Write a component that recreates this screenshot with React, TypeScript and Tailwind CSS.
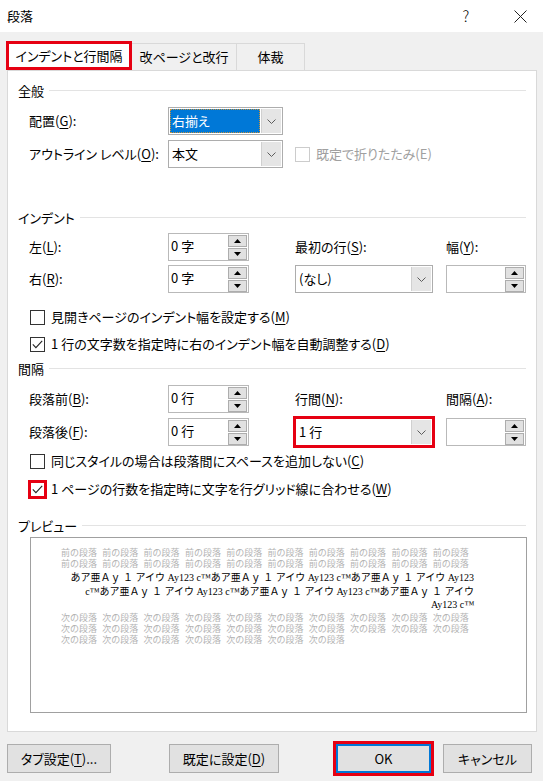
import React from "react";

// 段落 dialog (Word) — インデントと行間隔 tab

const U = ({ children }: { children: React.ReactNode }) => (
  <span className="underline decoration-1 underline-offset-2">{children}</span>
);

function SectionHeader({ title }: { title: string }) {
  return (
    <div className="flex h-[18px] items-center px-[10px]">
      <span className="text-[13px] leading-none">{title}</span>
      <div className="ml-[5px] h-px flex-1 bg-[#e3e3e3]" />
    </div>
  );
}

function Chevron() {
  return (
    <svg width="9" height="5" viewBox="0 0 9 5">
      <path d="M0.5 0.5 L4.5 4.5 L8.5 0.5" fill="none" stroke="#5c5c5c" strokeWidth="1" />
    </svg>
  );
}

function Triangle({ up }: { up?: boolean }) {
  return (
    <svg width="7" height="4" viewBox="0 0 7 4">
      <polygon points={up ? "0,4 3.5,0 7,4" : "0,0 3.5,4 7,0"} fill="#000" />
    </svg>
  );
}

function Select({
  className,
  children,
  focused,
  red,
}: {
  className: string;
  children?: React.ReactNode;
  focused?: boolean;
  red?: boolean;
}) {
  return (
    <div className={`relative flex h-[28px] border border-[#adadad] bg-white ${className}`}>
      {focused ? (
        <div className="m-[1px] flex flex-1 items-center border border-dotted border-[#c8913a] bg-[#0078d7] pl-px text-[13px] text-white">
          {children}
        </div>
      ) : (
        <div className="flex flex-1 items-center pl-[3px] text-[13px]">{children}</div>
      )}
      <div className="my-px mr-px flex w-[20px] items-center justify-center border-l border-[#d0d0d0] bg-[#e5e5e5]">
        <Chevron />
      </div>
      {red && <span className="pointer-events-none absolute -inset-[3px] border-[3px] border-[#e60012]" />}
    </div>
  );
}

function Spin({ className, value }: { className: string; value?: string }) {
  return (
    <div className={`flex h-[28px] border border-[#b9b9b9] bg-white ${className}`}>
      <span className="flex-1 pl-[2px] text-[13px] leading-[23px]">{value}</span>
      <div className="flex flex-col justify-center gap-px pr-px">
        <div className="flex h-[12px] w-[19px] items-center justify-center border border-[#adadad] bg-[#e1e1e1]">
          <Triangle up />
        </div>
        <div className="flex h-[12px] w-[19px] items-center justify-center border border-[#adadad] bg-[#e1e1e1]">
          <Triangle />
        </div>
      </div>
    </div>
  );
}

function Check({
  children,
  checked,
  disabled,
  red,
}: {
  children: React.ReactNode;
  checked?: boolean;
  disabled?: boolean;
  red?: boolean;
}) {
  return (
    <div className="flex h-[20px] items-center">
      <span
        className={`relative flex h-[15px] w-[15px] items-center justify-center border bg-white ${
          disabled ? "border-[#cccccc]" : "border-[#333333]"
        }`}
      >
        {checked && (
          <svg width="11" height="9" viewBox="0 0 11 9">
            <path d="M0.8 4.4 L3.9 7.6 L10.2 0.8" fill="none" stroke="#222" strokeWidth="1.1" />
          </svg>
        )}
        {red && <span className="pointer-events-none absolute -inset-[3px] border-[3px] border-[#e60012]" />}
      </span>
      <span className={`ml-[6px] text-[13px] ${disabled ? "text-[#a0a0a0]" : ""}`}>{children}</span>
    </div>
  );
}

function Label({ className, children }: { className?: string; children: React.ReactNode }) {
  return <span className={`text-[13px] ${className ?? ""}`}>{children}</span>;
}

function Button({ className, children, focus }: { className: string; children: React.ReactNode; focus?: boolean }) {
  return (
    <div
      className={`relative flex h-[29px] items-center justify-center bg-[#e1e1e1] text-[13px] ${
        focus ? "border-2 border-[#0078d7]" : "border border-[#adadad]"
      } ${className}`}
    >
      {children}
      {focus && <span className="pointer-events-none absolute -inset-[5px] border-[3px] border-[#e60012]" />}
    </div>
  );
}

const UNIT = "あア亜Ａｙ １ アイウ Ay123 c™";

function Preview() {
  const before = Array.from({ length: 20 }, () => "前の段落");
  const after = Array.from({ length: 27 }, () => "次の段落");
  return (
    <div className="ml-[22px] mt-[3px] h-[176px] w-[497px] border border-[#a0a0a0] bg-white pt-[10px] [font-feature-settings:normal]">
      <div className="flex w-[460px] flex-wrap gap-x-[5.3px] pl-[30px] text-[9px] leading-[10.5px] text-[#b3b3b3]">
        {before.map((t, i) => (
          <span key={i} className="w-[36px] whitespace-nowrap">
            {t}
          </span>
        ))}
      </div>
      <div className="mt-[2px] pr-[52px] text-right font-['Liberation_Serif','Noto_Sans_CJK_JP',serif] text-[10px] leading-[13.5px] whitespace-nowrap text-black">
        <div>{UNIT + UNIT + "あア亜Ａｙ １ アイウ Ay123"}</div>
        <div>{"c™" + UNIT.slice(0, -3) + " c™" + UNIT.slice(0, -3) + " c™あア亜Ａｙ １ アイウ"}</div>
        <div>Ay123 c™</div>
      </div>
      <div className="flex w-[460px] flex-wrap gap-x-[5.3px] pl-[30px] text-[9px] leading-[11px] text-[#b3b3b3]">
        {after.map((t, i) => (
          <span key={i} className="w-[36px] whitespace-nowrap">
            {t}
          </span>
        ))}
      </div>
    </div>
  );
}

export default function App() {
  return (
    <div className="flex h-[781px] w-[543px] flex-col bg-[#f0f0f0] font-['Noto_Sans_CJK_JP',sans-serif] text-black [font-feature-settings:'palt']">
      {/* title bar */}
      <div className="flex h-[32px] items-center bg-white">
        <span className="pl-[7px] text-[13px]">段落</span>
        <div className="ml-auto flex h-full items-center">
          <span className="w-[46px] text-center text-[15px] font-light">?</span>
          <span className="ml-[8px] flex w-[46px] items-center justify-center">
            <svg width="13" height="13" viewBox="0 0 13 13">
              <path d="M0.5 0.5 L12.5 12.5 M12.5 0.5 L0.5 12.5" stroke="#222" strokeWidth="1" />
            </svg>
          </span>
        </div>
      </div>

      {/* tabs */}
      <div className="mt-[9px] flex h-[29px] items-end pl-[6px]">
        <div className="relative z-10 flex h-[29px] w-[126px] items-center justify-center bg-white text-[13px]">
          インデントと行間隔
          <span className="pointer-events-none absolute inset-0 border-[3px] border-[#e60012]" />
        </div>
        <div className="flex h-[27px] w-[105px] items-center justify-center border-r border-t border-[#d9d9d9] text-[13px]">
          改ページと改行
        </div>
        <div className="flex h-[27px] w-[68px] items-center justify-center border-r border-t border-[#d9d9d9] text-[13px]">
          体裁
        </div>
      </div>

      {/* panel */}
      <div className="ml-[7px] h-[662px] w-[530px] border border-[#d9d9d9] bg-white pt-[10px]">
        <SectionHeader title="全般" />
        <div className="mt-[8px] flex items-center pl-[21px]">
          <Label className="w-[139px]">
            配置(<U>G</U>):
          </Label>
          <Select className="w-[115px]" focused>
            右揃え
          </Select>
        </div>
        <div className="mt-[5px] flex items-center pl-[21px]">
          <Label className="w-[139px]">
            アウトライン レベル(<U>O</U>):
          </Label>
          <Select className="w-[115px]">本文</Select>
          <div className="ml-[12px]">
            <Check disabled>既定で折りたたみ(E)</Check>
          </div>
        </div>

        <div className="mt-[40px]">
          <SectionHeader title="インデント" />
        </div>
        <div className="mt-[7px] flex items-center pl-[21px]">
          <Label className="w-[139px]">
            左(<U>L</U>):
          </Label>
          <Spin className="w-[81px]" value="0 字" />
          <Label className="ml-[46px] w-[151px]">
            最初の行(<U>S</U>):
          </Label>
          <Label>
            幅(<U>Y</U>):
          </Label>
        </div>
        <div className="mt-[4px] flex items-center pl-[21px]">
          <Label className="w-[139px]">
            右(<U>R</U>):
          </Label>
          <Spin className="w-[81px]" value="0 字" />
          <Select className="ml-[46px] w-[138px]">(なし)</Select>
          <Spin className="ml-[13px] w-[80px]" />
        </div>
        <div className="mt-[14px] pl-[22px]">
          <Check>
            見開きページのインデント幅を設定する(<U>M</U>)
          </Check>
        </div>
        <div className="mt-[7px] pl-[22px]">
          <Check checked>
            1 行の文字数を指定時に右のインデント幅を自動調整する(<U>D</U>)
          </Check>
        </div>

        <div className="mt-[5px]">
          <SectionHeader title="間隔" />
        </div>
        <div className="mt-[8px] flex items-center pl-[21px]">
          <Label className="w-[139px]">
            段落前(<U>B</U>):
          </Label>
          <Spin className="w-[81px]" value="0 行" />
          <Label className="ml-[46px] w-[151px]">
            行間(<U>N</U>):
          </Label>
          <Label>
            間隔(<U>A</U>):
          </Label>
        </div>
        <div className="mt-[5px] flex items-center pl-[21px]">
          <Label className="w-[139px]">
            段落後(<U>F</U>):
          </Label>
          <Spin className="w-[81px]" value="0 行" />
          <Select className="ml-[46px] w-[138px]" red>
            1 行
          </Select>
          <Spin className="ml-[13px] w-[80px]" />
        </div>
        <div className="mt-[5px] pl-[22px]">
          <Check>
            同じスタイルの場合は段落間にスペースを追加しない(<U>C</U>)
          </Check>
        </div>
        <div className="mt-[8px] pl-[22px]">
          <Check checked red>
            1 ページの行数を指定時に文字を行グリッド線に合わせる(<U>W</U>)
          </Check>
        </div>

        <div className="mt-[17px]">
          <SectionHeader title="プレビュー" />
        </div>
        <Preview />
      </div>

      {/* buttons */}
      <div className="mt-[12px] flex">
        <Button className="ml-[7px] w-[104px]">
          タブ設定(<U>T</U>)...
        </Button>
        <Button className="ml-[58px] w-[110px]">
          既定に設定(<U>D</U>)
        </Button>
        <Button className="ml-[57px] w-[95px]" focus>
          OK
        </Button>
        <Button className="ml-[12px] w-[89px]">キャンセル</Button>
      </div>
    </div>
  );
}
